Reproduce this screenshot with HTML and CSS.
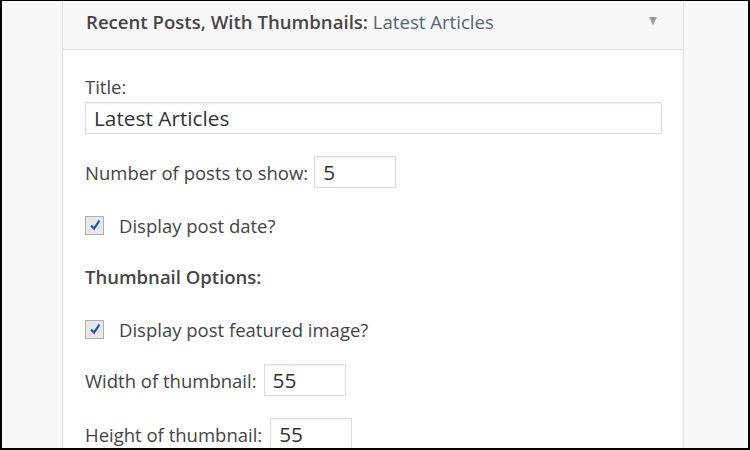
FILE: index.html
```html
<!DOCTYPE html>
<html lang="en">
<head>
  <meta charset="UTF-8">
  <title>Widget Settings</title>
  <link rel="stylesheet" href="styles.css">
</head>
<body>
  <div class="frame">
    <div class="widget">
      <div class="widget-top">
        <h3 class="widget-title">Recent Posts, With Thumbnails: <span class="in-title">Latest Articles</span></h3>
        <span class="widget-arrow"></span>
      </div>

      <div class="widget-inside">
        <label class="title-label" for="title">Title:</label>
        <input class="text-wide" type="text" id="title" value="Latest Articles">

        <p class="row row-posts">
          <label for="number">Number of posts to show:</label>
          <input class="text-small" type="text" id="number" value="5">
        </p>

        <p class="row row-check row-date">
          <span class="check">
            <svg width="12" height="12" viewBox="0 0 12 12"><path d="M2 6.5 L5 9.5 L10.5 1.5" fill="none" stroke="#2b4fb8" stroke-width="2.2"/></svg>
          </span>
          <span>Display post date?</span>
        </p>

        <h4 class="section-title">Thumbnail Options:</h4>

        <p class="row row-check row-image">
          <span class="check">
            <svg width="12" height="12" viewBox="0 0 12 12"><path d="M2 6.5 L5 9.5 L10.5 1.5" fill="none" stroke="#2b4fb8" stroke-width="2.2"/></svg>
          </span>
          <span>Display post featured image?</span>
        </p>

        <p class="row row-width">
          <label for="thumb-w">Width of thumbnail:</label>
          <input class="text-small" type="text" id="thumb-w" value="55">
        </p>

        <p class="row row-height">
          <label for="thumb-h">Height of thumbnail:</label>
          <input class="text-small" type="text" id="thumb-h" value="55">
        </p>
      </div>
    </div>
  </div>
</body>
</html>
```

FILE: styles.css
```css
:root {
  --text-color: #444;
  --border-color: #e2e2e2;
  --input-border: #dddddd;
}

body {
  margin: 0;
  font-family: "Open Sans", "Noto Sans", sans-serif;
  color: var(--text-color);
}

.frame {
  width: 750px;
  height: 450px;
  box-sizing: border-box;
  border: 2px solid #000;
  border-top-width: 1px;
  background-color: #f8f8f8;
  overflow: hidden;
}

.widget {
  margin-left: 60px;
  width: 622px;
  box-sizing: border-box;
  border-left: 1px solid var(--border-color);
  border-right: 1px solid var(--border-color);
  background-color: #fff;
  height: 100%;
}

.widget-top {
  height: 49px;
  display: flex;
  align-items: center;
  justify-content: space-between;
  padding: 0 26px 8px 23px;
  box-sizing: border-box;
  background-color: #f8f8f8;
  border-bottom: 1px solid var(--border-color);
}

.widget-title {
  margin: 0;
  font-size: 18.6px;
  font-weight: 600;
  color: #464646;
}

.in-title {
  font-weight: 400;
  color: #56647c;
}

.widget-arrow {
  width: 0;
  height: 0;
  border-left: 4.5px solid transparent;
  border-right: 4.5px solid transparent;
  border-top: 8px solid #9a9a9a;
}

.widget-inside {
  padding: 0 22px 0 22px;
  font-size: 18.5px;
}

.title-label {
  display: block;
  margin-top: 25px;
  line-height: 24px;
}

input[type="text"] {
  font-family: inherit;
  font-size: 20.8px;
  color: #333;
  height: 32px;
  box-sizing: border-box;
  border: 1px solid var(--input-border);
  box-shadow: inset 0 1px 2px rgba(0, 0, 0, 0.07);
  padding: 0 8px;
  outline: none;
}

.text-wide {
  display: block;
  width: 577px;
  margin-top: 3px;
}

.text-small {
  width: 82px;
  margin-left: 6px;
}

.row {
  display: flex;
  align-items: center;
  margin: 0;
}

.row-posts {
  margin-top: 22px;
}

.row-check {
  height: 24px;
}

.row-date {
  margin-top: 25px;
}

.row-image {
  margin-top: 28px;
}

.row-width {
  margin-top: 23px;
}

.row-width .text-small {
  margin-left: 7px;
}

.row-height {
  margin-top: 22px;
}

.row-height .text-small {
  margin-left: 8px;
}

.check {
  width: 17px;
  height: 17px;
  margin-left: 0;
  margin-right: 15px;
  border: 1px solid #b0b0b0;
  background-color: #e8e8e8;
  display: flex;
  align-items: center;
  justify-content: center;
}

.section-title {
  margin: 28px 0 0;
  line-height: 24px;
  font-size: 18.5px;
  font-weight: 600;
  color: #464646;
}
```
